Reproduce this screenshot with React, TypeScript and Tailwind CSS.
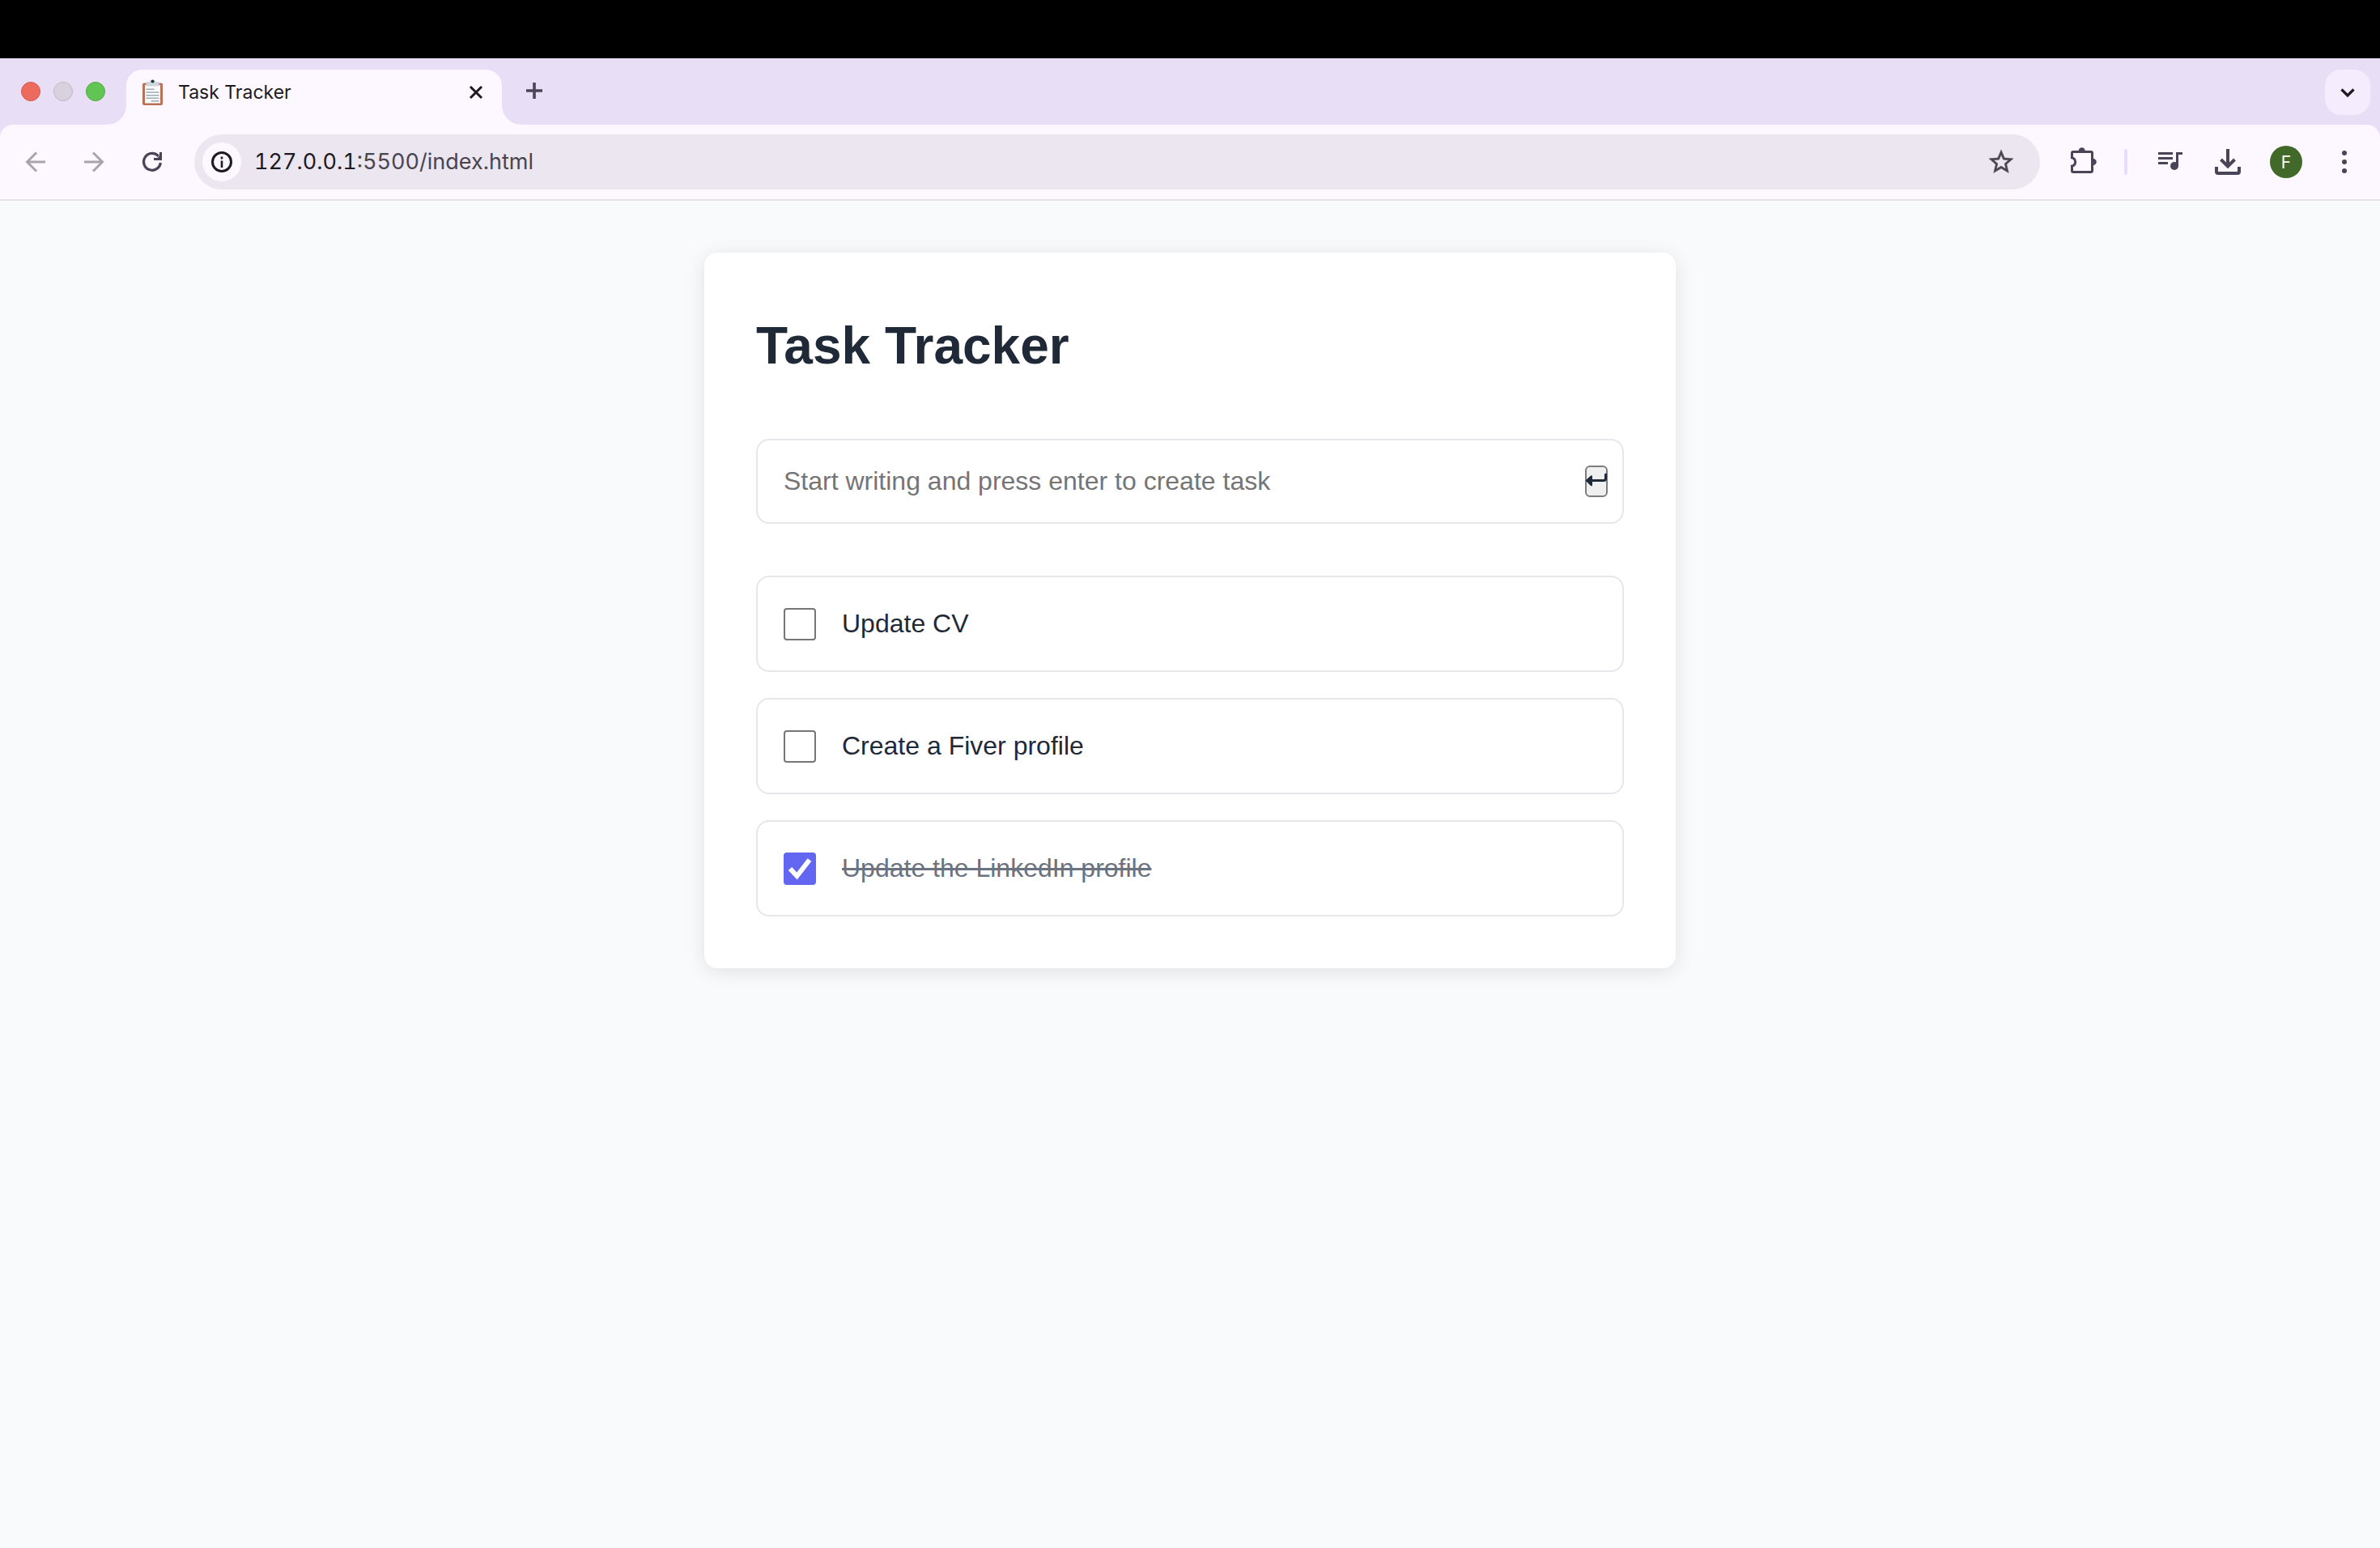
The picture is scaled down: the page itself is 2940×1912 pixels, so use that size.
import { useState } from "react";
import type { FormEvent, ReactNode } from "react";

type Task = { id: number; text: string; done: boolean };

const initialTasks: Task[] = [
  { id: 1, text: "Update CV", done: false },
  { id: 2, text: "Create a Fiver profile", done: false },
  { id: 3, text: "Update the LinkedIn profile", done: true },
];

function Icon({ children }: { children: ReactNode }) {
  return (
    <svg viewBox="0 0 40 40" className="size-10" fill="none" stroke="currentColor" strokeWidth="3" aria-hidden="true">
      {children}
    </svg>
  );
}

function IconButton({ label, className = "", children }: { label: string; className?: string; children: ReactNode }) {
  return (
    <button type="button" aria-label={label} className={`flex size-14 shrink-0 items-center justify-center ${className}`}>
      <Icon>{children}</Icon>
    </button>
  );
}

function ClipboardIcon() {
  return (
    <svg viewBox="0 0 32 36" className="h-9 w-8 shrink-0" aria-hidden="true">
      <rect x="4" y="6.500" width="25" height="27.500" rx="2" fill="#bb6f54" />
      <rect x="7" y="9" width="19" height="22.500" fill="#fcfcfd" />
      <path d="M8.500 10.500V6.500q0-1.500 1.500-1.500H12.500Q13.500 2.500 16.500 2.500t4 2.500h2.500q1.500 0 1.500 1.500v4z" fill="#ccd6dd" />
      <circle cx="16.500" cy="4.500" r="2" fill="#292f33" />
      <path d="M8.500 14.300h10M8.500 18h16M8.500 21.700h16M8.500 25.300h16M14.500 28.700h10" stroke="#99aab5" strokeWidth="1.600" />
    </svg>
  );
}

function TabStrip() {
  return (
    <div className="flex h-[82px] items-start pt-[14px] pl-[26px] pr-3">
      <div className="flex h-[54px] items-center gap-4">
        <button type="button" aria-label="Close window" className="size-6 rounded-full border border-[#d9564a] bg-[#ed6a5e]" />
        <button type="button" aria-label="Minimise window" className="size-6 rounded-full border border-[#bfb8c6] bg-[#d8d2de]" />
        <button type="button" aria-label="Zoom window" className="size-6 rounded-full border border-[#52a843] bg-[#61c554]" />
      </div>
      <div className="relative ml-[26px] flex h-[68px] w-[464px] items-start rounded-t-[20px] bg-[#fdf8ff]">
        <div className="absolute bottom-0 -left-6 size-6 bg-[#fdf8ff]">
          <div className="size-6 rounded-br-full bg-[#e8def6]" />
        </div>
        <div className="absolute bottom-0 -right-6 size-6 bg-[#fdf8ff]">
          <div className="size-6 rounded-bl-full bg-[#e8def6]" />
        </div>
        <div className="flex h-14 flex-1 items-center gap-4 pl-4 pr-3">
          <ClipboardIcon />
          <span className="flex-1 text-[23px] leading-8 text-[#1d1b20]">Task Tracker</span>
          <button type="button" aria-label="Close tab" className="text-[#1d1b20]">
            <Icon>
              <path d="M13 13l14 14M27 13l-14 14" />
            </Icon>
          </button>
        </div>
      </div>
      <IconButton label="New tab" className="ml-3 text-[#4a4458]">
        <path d="M10 18h20M20 8v20" strokeWidth="3.600" />
      </IconButton>
      <IconButton label="Search tabs" className="ml-auto rounded-[20px] bg-[#f5edfe] text-[#1d1b20]">
        <path d="M12.500 16.500l7.500 7.500 7.500-7.500" strokeWidth="3.200" />
      </IconButton>
    </div>
  );
}

function Toolbar() {
  return (
    <div className="flex h-[94px] items-center gap-4 rounded-t-[16px] border-b-2 border-[#e6e0eb] bg-[#fdf8ff] px-4 text-[#4a4458]">
      <IconButton label="Back" className="text-[#a9a4ac]">
        <path d="M32 20H10M21 8.500L9.500 20 21 31.500" />
      </IconButton>
      <IconButton label="Forward" className="text-[#a9a4ac]">
        <path d="M8 20h22M19 8.500L30.500 20 19 31.500" />
      </IconButton>
      <IconButton label="Reload">
        <path d="M30.300 21A10.400 10.400 0 1 1 27.800 13" strokeWidth="3.300" />
        <path d="M29 8h3v10H22v-3h4.500l2.500-2.500z" fill="currentColor" stroke="none" />
      </IconButton>
      <div className="ml-2 flex h-[68px] flex-1 items-center rounded-full bg-[#ece6f1] pl-[10px] pr-5">
        <button
          type="button"
          aria-label="View site information"
          className="flex size-12 shrink-0 items-center justify-center rounded-full bg-[#fdf8ff] text-[#1d1b20]"
        >
          <Icon>
            <circle cx="20" cy="20" r="11.500" />
            <path d="M20 18.500v8.500M20 13.500v3" strokeWidth="2.600" />
          </Icon>
        </button>
        <a href="#index" className="ml-4 flex-1 text-[27px] leading-9 tabular-nums text-[#49454e]">
          <span className="text-[#1d1b20]">127.0.0.1</span>:5500/index.html
        </a>
        <button type="button" aria-label="Bookmark this tab" className="flex size-14 items-center justify-center text-[#49454e]">
          <svg viewBox="0 0 24 24" className="size-9" fill="currentColor" stroke="currentColor" strokeWidth="0.300" aria-hidden="true">
            <path d="M22 9.240l-7.190-.62L12 2 9.190 8.630 2 9.240l5.460 4.730L5.820 21 12 17.270 18.180 21l-1.630-7.030L22 9.240zM12 15.400l-3.760 2.270 1-4.280-3.320-2.880 4.380-.38L12 6.100l1.710 4.040 4.380.38-3.320 2.880 1 4.280L12 15.400z" />
          </svg>
        </button>
      </div>
      <IconButton label="Extensions" className="ml-2">
        <path d="M6 14.500c7.500 1 7.500 10 0 11M7.500 15.500V9q0-1.500 1.500-1.500h22q1.500 0 1.500 1.500v22q0 1.500-1.500 1.500H9q-1.500 0-1.500-1.500v-6.500" />
        <path d="M15.500 7a4.200 4.800 0 0 1 8.400 0zM33 15.800a4.800 4.200 0 0 1 0 8.400z" fill="currentColor" stroke="none" />
      </IconButton>
      <div className="mx-2 h-8 w-1 rounded-full bg-[#e8ddff]" />
      <IconButton label="Media controls">
        <path d="M6 9.500h18M6 15.500h18M6 21.500h12M29.500 25V9.500H36" />
        <circle cx="26" cy="25" r="5" fill="currentColor" stroke="none" />
      </IconButton>
      <IconButton label="Downloads">
        <path d="M20 4v20M11.500 17l8.500 8.500 8.500-8.500M6 26v6q0 2 2 2h24q2 0 2-2v-6" strokeWidth="4" />
      </IconButton>
      <button type="button" aria-label="Profile" className="flex size-14 items-center justify-center">
        <span className="flex size-10 items-center justify-center rounded-full bg-[#41692a] text-[21px] leading-none text-white">
          F
        </span>
      </button>
      <IconButton label="Browser menu">
        <g fill="currentColor" stroke="none">
          <circle cx="20" cy="9" r="3" />
          <circle cx="20" cy="20" r="3" />
          <circle cx="20" cy="31" r="3" />
        </g>
      </IconButton>
    </div>
  );
}

function TaskRow({ task, onToggle }: { task: Task; onToggle: () => void }) {
  return (
    <li>
      <label className="flex items-center gap-8 rounded-[16px] border-2 border-[#e5e7eb] px-8 py-8">
        <span className="grid shrink-0">
          <input
            type="checkbox"
            checked={task.done}
            onChange={onToggle}
            className="peer col-start-1 row-start-1 size-10 appearance-none rounded-[4px] border-2 border-[#767676] bg-white checked:border-[#6366f1] checked:bg-[#6366f1]"
          />
          <svg
            viewBox="0 0 40 40"
            className="pointer-events-none invisible col-start-1 row-start-1 size-10 peer-checked:visible"
            fill="none"
            stroke="#ffffff"
            strokeWidth="6"
            aria-hidden="true"
          >
            <path d="M8 20l8.500 9L32 9" />
          </svg>
        </span>
        <span className={task.done ? "text-[32px] leading-[51px] text-[#6b7280] line-through" : "text-[32px] leading-[51px]"}>
          {task.text}
        </span>
      </label>
    </li>
  );
}

export default function App() {
  const [tasks, setTasks] = useState(initialTasks);
  const [draft, setDraft] = useState("");

  const addTask = (event: FormEvent) => {
    event.preventDefault();
    const text = draft.trim();
    if (!text) return;
    setTasks([...tasks, { id: Date.now(), text, done: false }]);
    setDraft("");
  };

  const toggle = (id: number) =>
    setTasks(tasks.map((task) => (task.id === id ? { ...task, done: !task.done } : task)));

  return (
    <div className="flex min-h-screen flex-col bg-[#f8fafc]">
      <header className="bg-[#e8def6] font-['Inter',sans-serif]">
        <div className="h-[72px] bg-black" />
        <TabStrip />
        <Toolbar />
      </header>
      <main className="mx-auto mt-16 w-full max-w-[1200px] rounded-[16px] bg-white p-16 font-['Liberation_Sans',sans-serif] text-[#1f2937] shadow-[0_4px_24px_rgba(0,0,0,0.1)]">
        <h1 className="text-[64px] leading-[102px] font-bold">Task Tracker</h1>
        <form
          onSubmit={addTask}
          className="mt-16 flex h-[105px] items-center rounded-[16px] border-2 border-[#e5e7eb] pr-[18px] pl-8"
        >
          <input
            type="text"
            aria-label="New task"
            value={draft}
            onChange={(event) => setDraft(event.target.value)}
            placeholder="Start writing and press enter to create task"
            className="h-[39px] min-w-0 flex-1 bg-transparent text-[32px] leading-[39px] outline-none placeholder:text-[#757575]"
          />
          <button
            type="submit"
            aria-label="Create task"
            className="h-[39px] w-7 rounded-[6px] border-2 border-[#7c7c7c] bg-[#efefef]"
          >
            <svg viewBox="0 0 28 35" className="-mx-0.5 h-[35px] w-7" aria-hidden="true">
              <path d="M0.500 16.500L7 10.500q2-1 2 1v10.500q0 2-2 1z" fill="#1f2937" />
              <path d="M7 16.500h16q2.500 0 2.500-2.500V9" fill="none" stroke="#1f2937" strokeWidth="3" strokeLinecap="round" />
            </svg>
          </button>
        </form>
        <ul className="mt-16 flex flex-col gap-8">
          {tasks.map((task) => (
            <TaskRow key={task.id} task={task} onToggle={() => toggle(task.id)} />
          ))}
        </ul>
      </main>
    </div>
  );
}
